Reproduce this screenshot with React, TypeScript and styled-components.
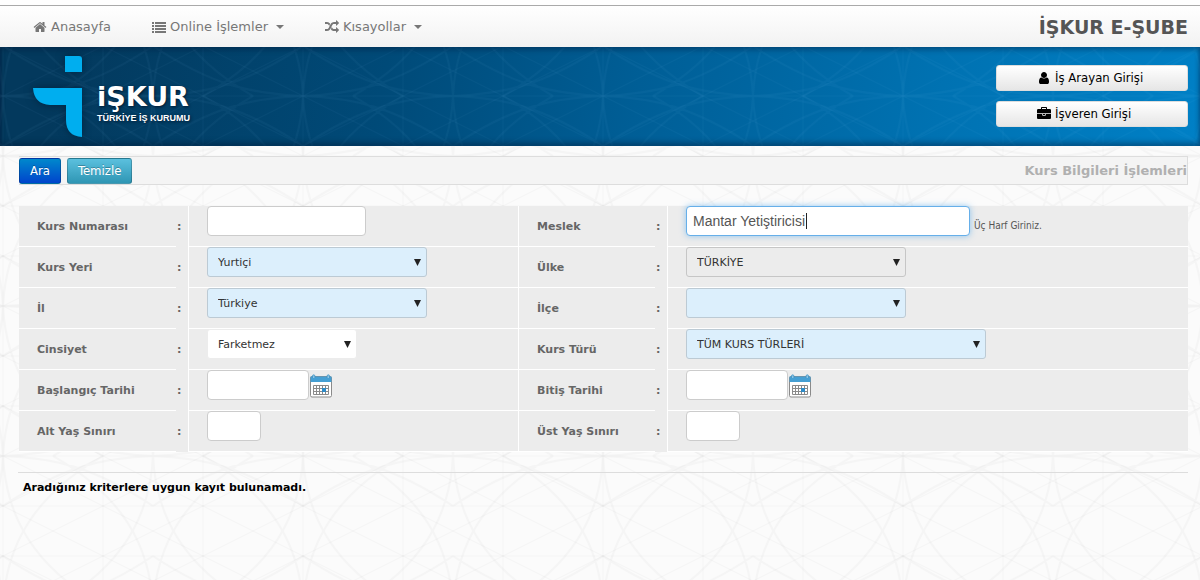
import React from "react";
import styled, { createGlobalStyle } from "styled-components";

const wide = `"DejaVu Sans", Verdana, sans-serif`;
const narrow = `"DejaVu Sans Condensed", Tahoma, "DejaVu Sans", sans-serif`;

const svgUrl = (svg: string) => `url("data:image/svg+xml,${encodeURIComponent(svg)}")`;

/* Geometric lattice: one 300x150 tile, stars every 150px, grid lines every 100px */
const lattice = (stroke: string, opacity: number) => {
  const lines: string[] = [];
  for (let x = 0; x <= 300; x += 100) lines.push(`M${x} 0V150`);
  for (let y = 0; y <= 150; y += 50) lines.push(`M0 ${y}H300`);
  for (let x = -300; x <= 600; x += 100) {
    lines.push(`M${x} 0l300 150M${x} 0l-300 150`);
  }
  const curves: string[] = [];
  for (let x = -150; x <= 450; x += 150) {
    [1, -1].forEach((s) => {
      curves.push(`M${x} 0C${x + 3 * s} 60 ${x + 30 * s} 110 ${x + 100 * s} 150`);
      curves.push(`M${x} 150C${x + 3 * s} 90 ${x + 30 * s} 40 ${x + 100 * s} 0`);
      curves.push(`M${x} 0C${x + 50 * s} 2 ${x + 90 * s} 10 ${x + 150 * s} 50`);
      curves.push(`M${x} 150C${x + 50 * s} 148 ${x + 90 * s} 140 ${x + 150 * s} 100`);
    });
  }
  return svgUrl(
    `<svg xmlns="http://www.w3.org/2000/svg" width="300" height="150"><g fill="none" stroke="${stroke}" stroke-opacity="${opacity}"><path stroke-width="1" d="${lines.join("")}"/><path stroke-width="2" d="${curves.join("")}"/></g></svg>`
  );
};

const arrow = svgUrl(
  `<svg xmlns="http://www.w3.org/2000/svg" width="7" height="7"><path d="M0 0H7L3.5 7z" fill="#222"/></svg>`
);

const GlobalStyle = createGlobalStyle`
  *, *::before, *::after { box-sizing: border-box; }
  body {
    margin: 0;
    min-height: 100vh;
    font-family: ${wide};
    font-size: 11px;
    color: #555;
    background: #fbfbfb ${lattice("#000", 0.025)} 3px 6px;
  }
`;

const Navbar = styled.nav`
  display: flex;
  align-items: center;
  height: 42px;
  margin-top: 5px;
  padding: 0 12px 0 33px;
  border-top: 1px solid #aaa;
  background: linear-gradient(#fff, #f2f2f2);
  box-shadow: 0 -5px 0 #fff;
`;

const NavLink = styled.a`
  display: flex;
  align-items: center;
  gap: 4px;
  margin-right: 41px;
  font-size: 13px;
  line-height: 20px;
  color: #777;
  text-decoration: none;
`;

const Caret = styled.span`
  margin-left: 4px;
  border: 4px solid transparent;
  border-top-color: #777;
  border-bottom: 0;
`;

const Brand = styled.a`
  margin-left: auto;
  font-size: 19px;
  font-weight: bold;
  color: #555;
  text-decoration: none;
`;

const Banner = styled.header`
  display: flex;
  justify-content: space-between;
  height: 99px;
  padding: 0 12px 0 33px;
  background:
    ${lattice("#7fd0ff", 0.045)} 3px 49px,
    linear-gradient(100deg, #03395d 5%, #004a78 32%, #005e96 53%, #0072b2 78%, #0080c6);
  box-shadow: inset 0 3px 5px rgba(0, 20, 50, 0.35), inset 0 -4px 5px rgba(0, 20, 50, 0.35);
`;

const Logo = styled.a`
  display: flex;
  gap: 15px;
  padding-top: 9px;
  color: #fff;
  text-decoration: none;
`;

const LogoMark = styled.svg`
  filter: drop-shadow(0 0 4px rgba(0, 20, 40, 0.6));
`;

const LogoWords = styled.span`
  display: flex;
  flex-direction: column;
  padding-top: 26px;
  text-shadow: 1px 1px 3px rgba(0, 15, 35, 0.8);
`;

const LogoName = styled.strong`
  font-size: 27px;
  line-height: 30px;
`;

const LogoSub = styled.span`
  font: bold 9px/12px "Liberation Sans", Arial, sans-serif;
`;

const Logins = styled.div`
  display: flex;
  flex-direction: column;
  gap: 10px;
  width: 192px;
  padding-top: 18px;
`;

const LoginButton = styled.button`
  display: flex;
  align-items: center;
  gap: 4px;
  height: 26px;
  padding: 0 0 0 40px;
  border: 1px solid #ddd;
  border-radius: 3px;
  background: linear-gradient(#fff, #e6e6e6);
  font: 13px/20px ${narrow};
  color: #000;
`;

const Main = styled.main`
  padding: 10px 12px 0 19px;
`;

const Toolbar = styled.div`
  display: flex;
  align-items: center;
  gap: 6px;
  height: 29px;
  border: solid #ddd;
  border-width: 1px 1px 1px 0;
  background: #f4f4f4;
`;

const ToolButton = styled.button<{ $from: string; $to: string }>`
  height: 26px;
  padding: 0 10px;
  border: 1px solid rgba(0, 0, 0, 0.2);
  border-radius: 3px;
  background: linear-gradient(${(p) => p.$from}, ${(p) => p.$to});
  font: 13px/20px ${narrow};
  color: #fff;
  text-shadow: 0 -1px 0 rgba(0, 0, 0, 0.25);
`;

const Title = styled.h1`
  margin: 0 0 0 auto;
  font-size: 13px;
  line-height: 20px;
  color: #b0b0b0;
`;

const Form = styled.form`
  display: grid;
  grid-template-columns: 157px 13px 330px 136px 13px 1fr;
  grid-auto-rows: 41px;
  margin-top: 21px;
  background: #ececec;
`;

const Label = styled.label`
  display: flex;
  align-items: center;
  padding-left: 18px;
  border-bottom: 1px solid #fff;
  font-weight: bold;
  color: #666;
`;

const Colon = styled.span`
  display: flex;
  align-items: center;
  padding-left: 1px;
  border-right: 1px solid #fff;
  font-weight: bold;
  color: #666;
`;

const Field = styled.div<{ $last?: boolean }>`
  display: flex;
  align-items: flex-start;
  padding-left: 18px;
  border: solid #fff;
  border-width: 0 ${(p) => (p.$last ? "0" : "1px")} 1px 0;
`;

const TextBox = styled.input<{ $width: number }>`
  width: ${(p) => p.$width}px;
  height: 30px;
  padding: 4px 6px;
  border: 1px solid #ccc;
  border-radius: 4px;
  background: #fff;
  font: 14px/20px "Liberation Sans", Arial, sans-serif;
  color: #555;
`;

const ActiveTextBox = styled(TextBox)`
  border-color: #66afe9;
  outline: 0;
  box-shadow: 0 0 6px rgba(82, 168, 236, 0.6);
  background: linear-gradient(#222, #222) 119px 6px / 1px 16px no-repeat #fff;
  caret-color: transparent;
`;

const tones = {
  blue: { back: "#dceffc", edge: "#bccad4" },
  gray: { back: "#ececec", edge: "#c6c6c6" },
  white: { back: "#fff", edge: "#ececec" },
};

const DropDown = styled.select<{ $width: number; $tone: keyof typeof tones }>`
  appearance: none;
  width: ${(p) => p.$width}px;
  height: 30px;
  padding: 2px 20px 0 10px;
  border: 1px solid ${(p) => tones[p.$tone].edge};
  border-radius: 3px;
  background: ${arrow} right 5px top 11px no-repeat ${(p) => tones[p.$tone].back};
  font: 11px/20px ${wide};
  color: #333;
`;

const Hint = styled.small`
  padding: 13px 0 0 4px;
  font: 10px/14px ${narrow};
  color: #555;
`;

const DateButton = styled.button`
  display: block;
  height: 24px;
  margin: 4px 0 0 1px;
  padding: 0;
  border: 0;
  background: none;
`;

const Result = styled.p`
  margin: 20px 0 0 -1px;
  padding: 8px 5px;
  border-top: 1px solid #ddd;
  font-weight: bold;
  line-height: 14px;
  color: #000;
`;

const icons = {
  home: "M1472 992v480q0 26-19 45t-45 19h-384v-384h-256v384h-384q-26 0-45-19t-19-45v-480q0-1 .5-3t.5-3l575-474 575 474q1 2 1 6zm223-69l-62 74q-8 9-21 11h-3q-13 0-21-7l-692-577-692 577q-12 8-24 7-13-2-21-11l-62-74q-8-10-7-23.5t11-21.5l719-599q32-26 76-26t76 26l244 204v-195q0-14 9-23t23-9h192q14 0 23 9t9 23v408l219 182q10 8 11 21.5t-7 23.5z",
  list: "M0 256h256v256H0zM0 640h256v256H0zM0 1024h256v256H0zM0 1408h256v256H0zM384 256h1408v256H384zM384 640h1408v256H384zM384 1024h1408v256H384zM384 1408h1408v256H384z",
  random:
    "M666 481q-60 92-137 273-22-45-37-72.5t-40.5-63.5-51-56.5-63-35-81.5-14.5h-224q-14 0-23-9t-9-23v-192q0-14 9-23t23-9h224q250 0 410 225zm1126 799q0 14-9 23l-320 320q-9 9-23 9-13 0-22.5-9.5t-9.5-22.5v-192q-32 0-85 .5t-81 1-73-1-71-5-64-10.5-63-18.5-58-28.5-59-40-55-53.5-56-69.5q59-93 136-273 22 45 37 72.5t40.5 63.5 51 56.5 63 35 81.5 14.5h256v-192q0-14 9-23t23-9q12 0 24 10l319 319q9 9 9 23zm0-896q0 14-9 23l-320 320q-9 9-23 9-13 0-22.5-9.5t-9.5-22.5v-192h-256q-48 0-87 15t-69 45-51 61.5-45 77.5q-32 62-78 171-29 66-49.5 111t-54 105-64 100-74 83-90 68.5-106.5 42-128 16.5h-224q-14 0-23-9t-9-23v-192q0-14 9-23t23-9h224q48 0 87-15t69-45 51-61.5 45-77.5q32-62 78-171 29-66 49.5-111t54-105 64-100 74-83 90-68.5 106.5-42 128-16.5h256v-192q0-14 9-23t23-9q12 0 24 10l319 319q9 9 9 23z",
  user: "M1536 1399q0 109-62.5 187t-150.5 78h-854q-88 0-150.5-78t-62.5-187q0-85 8.5-160.5t31.5-152 58.5-131 94-89 134.5-34.5q131 128 313 128t313-128q76 0 134.5 34.5t94 89 58.5 131 31.5 152 8.5 160.5zm-256-887q0 159-112.5 271.5t-271.5 112.5-271.5-112.5-112.5-271.5 112.5-271.5 271.5-112.5 271.5 112.5 112.5 271.5z",
  briefcase:
    "M640 256h512v-128h-512v128zm1152 640v480q0 66-47 113t-113 47h-1472q-66 0-113-47t-47-113v-480h672v160q0 26 19 45t45 19h320q26 0 45-19t19-45v-160h672zm-768 0v128h-256v-128h256zm768-480v384h-1792v-384q0-66 47-113t113-47h352v-160q0-40 28-68t68-28h576q40 0 68 28t28 68v160h352q66 0 113 47t47 113z",
};

const Icon = ({ name, size = 14 }: { name: keyof typeof icons; size?: number }) => (
  <svg width={size} height={size} viewBox="0 0 1792 1792" fill="currentColor" aria-hidden="true">
    <path d={icons[name]} />
  </svg>
);

const CalendarIcon = () => (
  <svg width="22" height="24" viewBox="0 0 22 24" aria-hidden="true">
    <rect x="0.5" y="2.5" width="21" height="20.5" rx="1.5" fill="#fff" stroke="#8a8a8a" />
    <path d="M0.5 2.5h21V8h-21z" fill="#459fd3" />
    <path d="M2.5 4V2a1.2 1.2 0 0 1 2.4 0V4M17.1 4V2a1.2 1.2 0 0 1 2.4 0V4" fill="#8cc4e4" stroke="#3a8fc2" strokeWidth="0.7" />
    <path d="M3.5 11.5h15v9h-15zM3.5 14.5h15M3.5 17.5h15M6.5 11v10M9.5 11v10M12.5 11v10M15.5 11v10" fill="none" stroke="#8a8a8a" />
    <path d="M12 14h4v4h-4z" fill="#2e8ac6" />
  </svg>
);

const DateField = ({ id, title }: { id: string; title: string }) => (
  <>
    <TextBox id={id} $width={102} />
    <DateButton type="button" aria-label={title}>
      <CalendarIcon />
    </DateButton>
  </>
);

interface Cell {
  id: string;
  label: string;
  control: React.ReactNode;
}

const choice = (id: string, text: string, width: number, tone: keyof typeof tones) => (
  <DropDown id={id} $width={width} $tone={tone}>
    <option>{text}</option>
  </DropDown>
);

const cells: Cell[] = [
  { id: "no", label: "Kurs Numarası", control: <TextBox id="no" $width={159} /> },
  {
    id: "meslek",
    label: "Meslek",
    control: (
      <>
        <ActiveTextBox id="meslek" $width={284} defaultValue="Mantar Yetiştiricisi" />
        <Hint>Üç Harf Giriniz.</Hint>
      </>
    ),
  },
  { id: "yer", label: "Kurs Yeri", control: choice("yer", "Yurtiçi", 220, "blue") },
  { id: "ulke", label: "Ülke", control: choice("ulke", "TÜRKİYE", 220, "gray") },
  { id: "il", label: "İl", control: choice("il", "Türkiye", 220, "blue") },
  { id: "ilce", label: "İlçe", control: choice("ilce", "", 220, "blue") },
  { id: "cinsiyet", label: "Cinsiyet", control: choice("cinsiyet", "Farketmez", 150, "white") },
  { id: "tur", label: "Kurs Türü", control: choice("tur", "TÜM KURS TÜRLERİ", 300, "blue") },
  { id: "baslangic", label: "Başlangıç Tarihi", control: <DateField id="baslangic" title="Başlangıç tarihi seç" /> },
  { id: "bitis", label: "Bitiş Tarihi", control: <DateField id="bitis" title="Bitiş tarihi seç" /> },
  { id: "alt", label: "Alt Yaş Sınırı", control: <TextBox id="alt" $width={54} /> },
  { id: "ust", label: "Üst Yaş Sınırı", control: <TextBox id="ust" $width={54} /> },
];

export default function App() {
  return (
    <>
      <GlobalStyle />
      <Navbar>
        <NavLink href="#">
          <Icon name="home" />
          Anasayfa
        </NavLink>
        <NavLink href="#">
          <Icon name="list" />
          Online İşlemler
          <Caret />
        </NavLink>
        <NavLink href="#">
          <Icon name="random" />
          Kısayollar
          <Caret />
        </NavLink>
        <Brand href="#">İŞKUR E-ŞUBE</Brand>
      </Navbar>
      <Banner>
        <Logo href="#">
          <LogoMark width="49" height="82" viewBox="0 0 49 82" aria-hidden="true">
            <path
              d="M32 0H46Q49 0 49 3V16H32zM0 32H49V81Q33 80 33 64V49H17Q1 48 0 32z"
              fill="#00aeef"
            />
          </LogoMark>
          <LogoWords>
            <LogoName>iŞKUR</LogoName>
            <LogoSub>TÜRKİYE İŞ KURUMU</LogoSub>
          </LogoWords>
        </Logo>
        <Logins>
          <LoginButton type="button">
            <Icon name="user" />
            İş Arayan Girişi
          </LoginButton>
          <LoginButton type="button">
            <Icon name="briefcase" />
            İşveren Girişi
          </LoginButton>
        </Logins>
      </Banner>
      <Main>
        <Toolbar>
          <ToolButton type="submit" form="search" $from="#0088cc" $to="#0044cc">
            Ara
          </ToolButton>
          <ToolButton type="reset" form="search" $from="#5bc0de" $to="#2f96b4">
            Temizle
          </ToolButton>
          <Title>Kurs Bilgileri İşlemleri</Title>
        </Toolbar>
        <Form id="search" onSubmit={(e) => e.preventDefault()}>
          {cells.map((cell, i) => (
            <React.Fragment key={cell.id}>
              <Label htmlFor={cell.id}>{cell.label}</Label>
              <Colon>:</Colon>
              <Field $last={i % 2 === 1}>{cell.control}</Field>
            </React.Fragment>
          ))}
        </Form>
        <Result>Aradığınız kriterlere uygun kayıt bulunamadı.</Result>
      </Main>
    </>
  );
}
